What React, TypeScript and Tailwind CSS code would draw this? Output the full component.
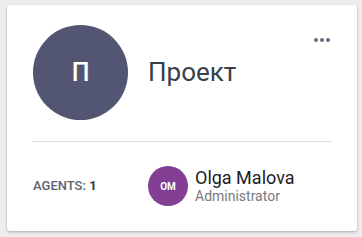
export default function App() {
  return (
    <div className="min-h-screen bg-[#eeeeee] pl-[7px] pt-[5px] font-['Roboto',sans-serif]">
      <div className="relative h-[226px] w-[350px] rounded-[3px] bg-white px-[25px] shadow-[0_1px_3px_rgba(0,0,0,0.3)]">
        {/* menu */}
        <button className="absolute right-[27px] top-[33px] flex gap-[2px] p-0">
          <span className="h-[4px] w-[4px] rounded-full bg-[#5f6f80]" />
          <span className="h-[4px] w-[4px] rounded-full bg-[#5f6f80]" />
          <span className="h-[4px] w-[4px] rounded-full bg-[#5f6f80]" />
        </button>

        {/* header */}
        <div className="flex items-center pt-[20px] pl-[1px]">
          <div className="flex h-[95px] w-[95px] items-center justify-center rounded-full bg-[#535672] text-[25px] font-medium text-white">
            П
          </div>
          <div className="ml-[20px] text-[26px] text-[#37404a]">Проект</div>
        </div>

        <div className="mt-[21px] h-px bg-[#dddddd]" />

        {/* footer */}
        <div className="mt-[24px] flex items-center pl-[1px]">
          <div className="w-[115px] text-[13px] font-medium text-[#5a6470]">
            AGENTS: <span className="font-bold text-[#333a40]">1</span>
          </div>
          <div className="flex h-[40px] w-[40px] items-center justify-center rounded-full bg-[#833f93] text-[10px] font-bold text-white">
            OM
          </div>
          <div className="ml-[7px] flex flex-col">
            <span className="text-[18px] leading-[20px] text-[#1d1d1d]">Olga Malova</span>
            <span className="text-[14px] leading-[16px] text-[#7a7a7a]">Administrator</span>
          </div>
        </div>
      </div>
    </div>
  );
}
